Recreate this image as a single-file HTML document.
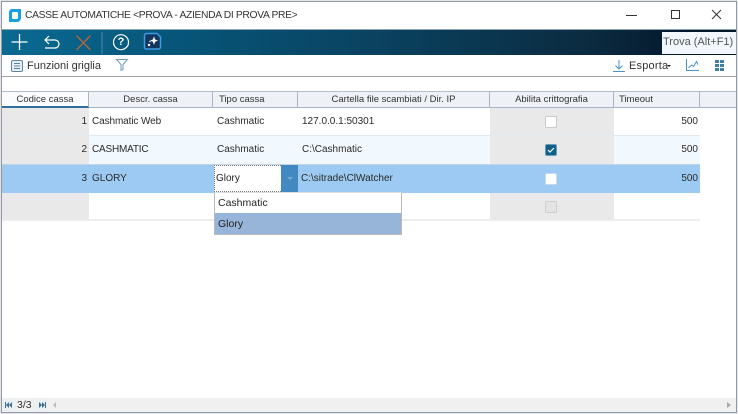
<!DOCTYPE html>
<html><head><meta charset="utf-8"><style>
*{box-sizing:border-box}
html,body{margin:0;padding:0;width:738px;height:414px;overflow:hidden;background:#fff}
body{font-family:"Liberation Sans",sans-serif;color:#222;font-size:10px;position:relative}
.a{position:absolute;white-space:nowrap}
.h{position:absolute;top:91px;height:17px;background:#eef1f6;border-right:1px solid #a9b4c6;border-top:1px solid #b4bdcc;border-bottom:1px solid #a9b4c6;line-height:16px;text-align:center;font-size:9.5px;color:#333}
.c{position:absolute;line-height:14px;white-space:nowrap;font-size:10px;color:#2a2a2a}
.cb{position:absolute;width:12px;height:12px;border-radius:2px;background:#fff;border:1px solid #c9c9c9}
</style></head><body>
<div class="a" style="left:0;top:0;width:738px;height:414px;border:1px solid #e4e4e4"></div>
<div class="a" style="left:1px;top:1px;width:736px;height:412px;border:1px solid #8f9aa6"></div>

<!-- title -->
<svg class="a" style="left:8px;top:8px" width="14" height="15"><path d="M4 1h9v9a4 4 0 0 1-4 4H1V4a3 3 0 0 1 3-3z" fill="#18a0e0"/><rect x="4" y="4" width="6" height="7" rx="1" fill="#fff"/></svg>
<div class="a" style="left:25px;top:9px;font-size:10.3px;line-height:14px;letter-spacing:-.33px;color:#333">CASSE AUTOMATICHE &lt;PROVA - AZIENDA DI PROVA PRE&gt;</div>
<svg class="a" style="left:625px;top:8px" width="105" height="14" fill="none" stroke="#333"><path d="M1 7.500h11"/><rect x="46.500" y="2.500" width="8" height="8"/><path d="M87 2l9 9M96 2l-9 9"/></svg>

<!-- toolbar -->
<div class="a" style="left:2px;top:29px;width:734px;height:1px;background:#8fa5b0"></div>
<div class="a" style="left:2px;top:30px;width:734px;height:25px;background:linear-gradient(90deg,#0a6a92 0%,#07567a 23%,#0a3f5c 55%,#0b2b40 80%,#04182c 93%,#04182c 100%)"></div>
<svg class="a" style="left:0;top:0" width="170" height="56" fill="none">
<path d="M19.500 34v16M11.500 42h16" stroke="#fff" stroke-width="1.300"/>
<path d="M49 36l-4 4 4 4M45 40h10a4 4 0 0 1 0 8H45" stroke="#fff" stroke-width="1.200"/>
<path d="M76.500 35.500l14 14.500M90.500 35.500L76.500 50" stroke="#b4663c" stroke-width="1.300"/>
<path d="M102 32v22" stroke="#4f8aa8" stroke-width="1"/>
<path d="M121 34.700a7.500 7.500 0 0 1 7.500 7.500c0 2-.5 3.500-1.500 4.500-1.300 1.500-3.500 3-6 3a7.500 7.500 0 0 1 0-15z" stroke="#fff" stroke-width="1.200"/>
<path d="M144.500 35.500a2 2 0 0 1 2-2H157l3.500 3.500v10a2 2 0 0 1-2 2h-12a2 2 0 0 1-2-2z" fill="#12365f" stroke="#3f9be6" stroke-width="1.500"/>
<path d="M154 36.500l1.200 3 2.800 1.100-2.800 1.100-1.200 3-1.200-3-2.800-1.100 2.800-1.100z" fill="#fff"/>
<circle cx="149" cy="45" r="1.200" fill="#fff"/>
<circle cx="150" cy="41.500" r=".7" fill="#fff"/>
</svg>
<div class="a" style="left:116px;top:35px;width:10px;text-align:center;color:#fff;font-size:11px;line-height:14px;font-weight:bold">?</div>
<div class="a" style="left:662px;top:32px;width:74px;height:22px;background:#f1f7fc;color:#555;font-size:11px;line-height:21px;padding-left:1px">Trova (Alt+F1)</div>

<!-- second toolbar -->
<svg class="a" style="left:10px;top:59px" width="14" height="14" fill="none"><rect x="1.500" y="1.500" width="11" height="11" rx="1.500" fill="#e6eff6" stroke="#5c86a3"/><path d="M4 4.500h6M4 7h6M4 9.500h6" stroke="#5c86a3"/></svg>
<div class="a" style="left:27px;top:59px;font-size:11px;line-height:14px;color:#333">Funzioni griglia</div>
<svg class="a" style="left:115px;top:58px" width="14" height="14" fill="none" stroke="#6a9cbc"><path d="M1.500 1.500h11l-4.500 5v5l-2 1v-6z"/></svg>
<svg class="a" style="left:612px;top:59px" width="14" height="14" fill="none" stroke="#4b92c4"><path d="M7 1v8.500M3.500 6.500L7 10l3.500-3.500M1 12.500h12"/></svg>
<div class="a" style="left:629px;top:59px;font-size:11px;line-height:14px;color:#333;letter-spacing:.2px">Esporta</div>
<div class="a" style="left:667px;top:65px;width:0;height:0;border-left:2px solid transparent;border-right:2px solid transparent;border-top:2px solid #222"></div>
<svg class="a" style="left:685px;top:58px" width="15" height="14" fill="none" stroke="#4b92c4"><path d="M1.500 1v11.500H14M3.500 10l3-3 2 1.500 3-5 1.500 3"/></svg>
<svg class="a" style="left:714px;top:59px" width="12" height="13" fill="#3f7f9f"><rect x="1" y="1" width="4" height="3"/><rect x="6" y="1" width="4" height="3"/><rect x="1" y="5" width="4" height="3"/><rect x="6" y="5" width="4" height="3"/><rect x="1" y="9" width="4" height="3"/><rect x="6" y="9" width="4" height="3"/></svg>
<div class="a" style="left:2px;top:76px;width:734px;height:1px;background:#a6a6a6"></div>

<!-- header -->
<div class="h" style="left:2px;width:87px;background:#fafbfc;border-bottom:2px solid #2f6f9f">Codice cassa</div>
<div class="h" style="left:89px;width:124px">Descr. cassa</div>
<div class="h" style="left:213px;width:85px;text-align:left;padding-left:6px">Tipo cassa</div>
<div class="h" style="left:298px;width:192px">Cartella file scambiati / Dir. IP</div>
<div class="h" style="left:490px;width:124px">Abilita crittografia</div>
<div class="h" style="left:614px;width:86px;text-align:left;padding-left:5px">Timeout</div>
<div class="h" style="left:700px;width:36px;border-right:0"></div>

<!-- rows -->
<div class="a" style="left:2px;top:108px;width:698px;height:28px;background:#fff;border-bottom:1px solid #e6edf2"></div>
<div class="a" style="left:2px;top:136px;width:698px;height:28px;background:#f2f9fe"></div>
<div class="a" style="left:2px;top:164px;width:698px;height:29px;background:#9ccaf2;border-top:1px solid #c0d4e4"></div>
<div class="a" style="left:2px;top:193px;width:698px;height:28px;background:#fff;border-bottom:2px solid #eee"></div>
<div class="a" style="left:2px;top:108px;width:87px;height:56px;background:#e9e9e9"></div>
<div class="a" style="left:2px;top:193px;width:87px;height:27px;background:#e9e9e9"></div>
<div class="a" style="left:490px;top:108px;width:124px;height:56px;background:#e9e9e9"></div>
<div class="a" style="left:490px;top:193px;width:124px;height:27px;background:#e9e9e9"></div>
<div class="a" style="left:2px;top:135px;width:698px;height:1px;background:#e2e9ee"></div>

<!-- text -->
<div class="c" style="left:2px;width:85px;text-align:right;top:115px">1</div>
<div class="c" style="left:92px;top:115px;letter-spacing:-.1px">Cashmatic Web</div>
<div class="c" style="left:217px;top:115px">Cashmatic</div>
<div class="c" style="left:302px;top:115px">127.0.0.1:50301</div>
<div class="c" style="left:614px;width:84px;text-align:right;top:115px">500</div>

<div class="c" style="left:2px;width:85px;text-align:right;top:143px">2</div>
<div class="c" style="left:92px;top:143px;letter-spacing:-.2px">CASHMATIC</div>
<div class="c" style="left:217px;top:143px">Cashmatic</div>
<div class="c" style="left:302px;top:143px">C:\Cashmatic</div>
<div class="c" style="left:614px;width:84px;text-align:right;top:143px">500</div>

<div class="c" style="left:2px;width:85px;text-align:right;top:172px">3</div>
<div class="c" style="left:92px;top:172px">GLORY</div>
<div class="c" style="left:301px;top:172px">C:\sitrade\ClWatcher</div>
<div class="c" style="left:614px;width:84px;text-align:right;top:172px">500</div>

<!-- combo -->
<div class="a" style="left:214px;top:165px;width:67px;height:27px;background:#fff;border:1px dotted #777;border-right:0;font-size:10px;line-height:26px;padding-left:1px">Glory</div>
<div class="a" style="left:281px;top:165px;width:17px;height:27px;background:#4289c2"></div>
<div class="a" style="left:287px;top:177px;width:0;height:0;border-left:3px solid transparent;border-right:3px solid transparent;border-top:3px solid #7fa9cc"></div>

<!-- dropdown -->
<div class="a" style="left:214px;top:192px;width:188px;height:43px;background:#fff;border:1px solid #bbb;border-top:1px solid #ddd"></div>
<div class="a" style="left:215px;top:213px;width:186px;height:21px;background:#97b5d8"></div>
<div class="a" style="left:218px;top:196px;font-size:10.500px;line-height:14px">Cashmatic</div>
<div class="a" style="left:218px;top:217px;font-size:10.500px;line-height:14px">Glory</div>

<!-- checkboxes -->
<div class="cb" style="left:545px;top:116px"></div>
<div class="cb" style="left:545px;top:144px;background:#0f5f8c;border-color:#6d9ab5"></div>
<svg class="a" style="left:545px;top:144px" width="12" height="12" fill="none" stroke="#fff" stroke-width="1.200"><path d="M3 6l2 2 4-4"/></svg>
<div class="cb" style="left:545px;top:173px;border-color:#c8dcec"></div>
<div class="cb" style="left:545px;top:201px;background:#e4e4e4;border-color:#cfcfcf"></div>

<!-- status -->
<div class="a" style="left:2px;top:398px;width:734px;height:14px;background:#f0f0f0"></div>
<div class="a" style="left:3px;top:399px;width:10px;height:12px;background:#e8eff5"></div>
<div class="a" style="left:37px;top:399px;width:10px;height:12px;background:#e8eff5"></div>
<div class="a" style="left:5px;top:402px;width:7px;height:6px;font-size:0"><svg width="7" height="6" fill="#3f6f8f"><path d="M0 0h1v6H0zM4 0v6L1 3zM7 0v6L4 3z"/></svg></div>
<div class="a" style="left:39px;top:402px;width:7px;height:6px;font-size:0"><svg width="7" height="6" fill="#3f6f8f"><path d="M0 0l3 3-3 3zM3 0l3 3-3 3zM6 0h1v6H6z"/></svg></div>
<div class="a" style="left:17px;top:398px;font-size:10.500px;line-height:14px;color:#333">3/3</div>
<div class="a" style="left:53px;top:402px;width:0;height:0;border-top:3px solid transparent;border-bottom:3px solid transparent;border-right:3px solid #bbb"></div>
<div class="a" style="left:727px;top:402px;width:0;height:0;border-top:3px solid transparent;border-bottom:3px solid transparent;border-left:4px solid #aaa"></div>
</body></html>
